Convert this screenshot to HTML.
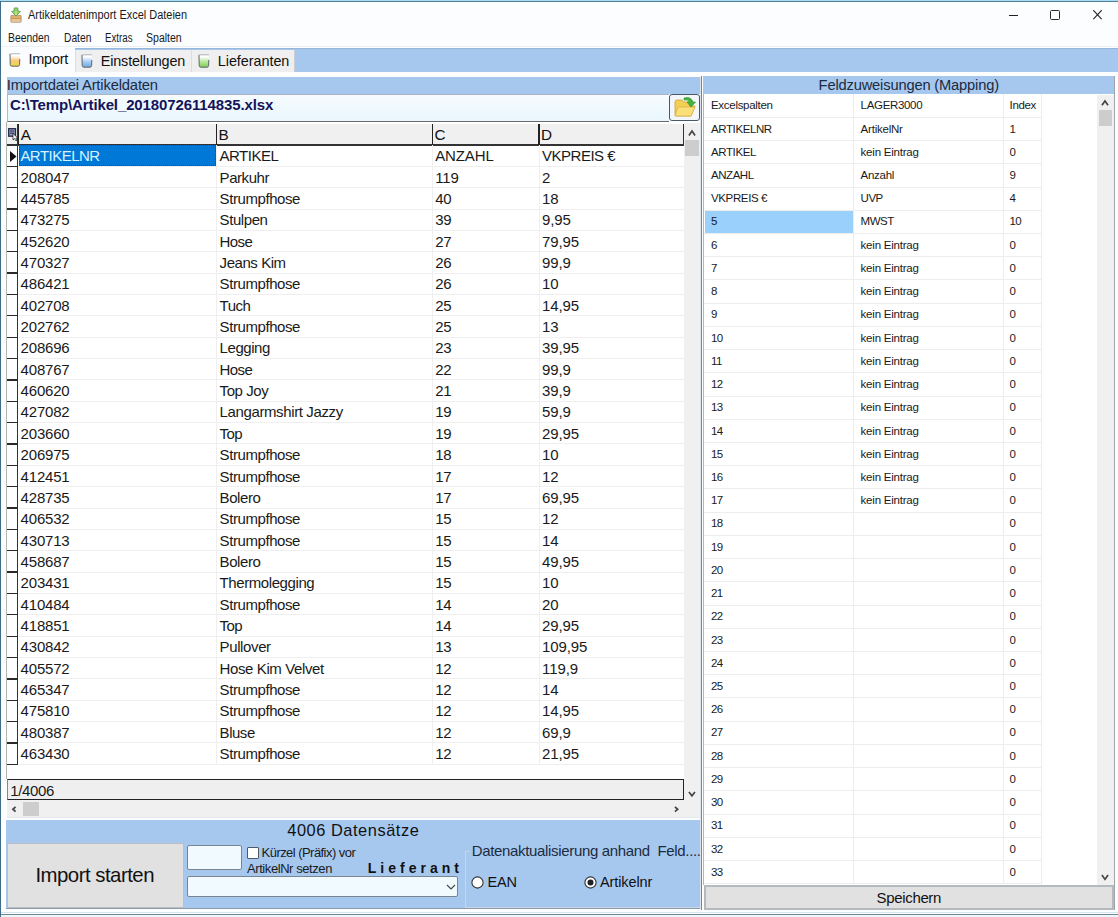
<!DOCTYPE html>
<html><head><meta charset="utf-8"><style>
html,body{margin:0;padding:0;}
body{width:1118px;height:917px;position:relative;overflow:hidden;background:#fbfdff;font-family:"Liberation Sans", sans-serif;}
body>div{position:absolute;}
.t{white-space:nowrap;}
</style></head><body>
<div style="left:0px;top:0px;width:1118px;height:1px;background:#a9dcef"></div>
<div style="left:0px;top:1px;width:1118px;height:1px;background:#4f8197"></div>
<div style="left:0px;top:1px;width:1.1px;height:916px;background:#3d6b88"></div>
<svg style="position:absolute;left:9.5px;top:6.5px" width="12" height="16" viewBox="0 0 12 16">
<defs><linearGradient id="tb" x1="0" y1="0" x2="0" y2="1"><stop offset="0" stop-color="#d9a867"/><stop offset="1" stop-color="#ecd2a8"/></linearGradient></defs>
<rect x="0.8" y="8.3" width="10.4" height="7" rx="0.8" fill="url(#tb)" stroke="#a88660" stroke-width="0.7"/>
<rect x="1.5" y="10.8" width="9" height="1" fill="#c08440" opacity="0.8"/>
<path d="M4 1.2 Q6 0.2 8 1.2 L8 4 L10.5 4.5 L6 9 L1.5 4.5 L4 4 Z" fill="#8ccb6a" stroke="#5e9a4a" stroke-width="0.7"/>
<path d="M6 4 L6 8" stroke="#d8f08a" stroke-width="1.2"/>
</svg>
<div class="t" style="left:28.20px;top:9.24px;font-size:12px;line-height:12px;transform:scaleX(0.9135);transform-origin:0.00px 0;color:#1a1a1a">Artikeldatenimport Excel Dateien</div>
<div style="left:1009px;top:14.6px;width:9px;height:1.5px;background:#222"></div>
<div style="left:1050px;top:10px;width:9.6px;height:9.5px;border:1.5px solid #2a2a2a;box-sizing:border-box;border-radius:1.5px"></div>
<svg style="position:absolute;left:1093px;top:10px" width="9" height="9.5" viewBox="0 0 9 9.5">
<path d="M0.3 0.3 L8.7 9.2 M8.7 0.3 L0.3 9.2" stroke="#222" stroke-width="1.2"/></svg>
<div class="t" style="left:7.90px;top:32.44px;font-size:12px;line-height:12px;transform:scaleX(0.8656);transform-origin:0.00px 0;color:#1a1a1a">Beenden</div>
<div class="t" style="left:63.60px;top:32.44px;font-size:12px;line-height:12px;transform:scaleX(0.8552);transform-origin:0.00px 0;color:#1a1a1a">Daten</div>
<div class="t" style="left:104.90px;top:32.44px;font-size:12px;line-height:12px;transform:scaleX(0.8083);transform-origin:0.00px 0;color:#1a1a1a">Extras</div>
<div class="t" style="left:145.90px;top:32.44px;font-size:12px;line-height:12px;transform:scaleX(0.8776);transform-origin:0.00px 0;color:#1a1a1a">Spalten</div>
<div style="left:1px;top:46px;width:1117px;height:1px;background:#eef1f4"></div>
<div style="left:1px;top:47.9px;width:1117px;height:24px;background:#a6c8ef"></div>
<div style="left:1px;top:47.9px;width:1117px;height:1.3px;background:#98b6d8"></div>
<div style="left:1px;top:47.9px;width:74px;height:24.1px;background:#fbfcfd"></div>
<div style="left:75px;top:50px;width:115.5px;height:22px;background:#efefef;border-left:1px solid #d8dde3;box-sizing:border-box"></div>
<div style="left:190.5px;top:50px;width:104px;height:22px;background:#efefef;border-left:1px solid #d8dde3;border-right:1.6px solid #c9ced4;box-sizing:border-box"></div>
<svg style="position:absolute;left:9px;top:52.5px" width="12" height="14" viewBox="0 0 12 14">
<defs><linearGradient id="g1" x1="0" y1="0" x2="0" y2="1"><stop offset="0.15" stop-color="#ffffff"/><stop offset="0.55" stop-color="#f6c97a"/><stop offset="1" stop-color="#f2d640"/></linearGradient></defs>
<path d="M1 0.8 L11 0.8 L10.6 11.6 Q10.4 13.2 9 13.2 L3 13.2 Q1.3 13.2 1.2 11.6 Z" fill="url(#g1)"/>
<path d="M1.5 0.8 L11 0.8" stroke="#9aa0a6" stroke-width="0.8"/>
<path d="M1 0.8 L1.2 11.6 Q1.3 13.2 3 13.2 L9 13.2 Q10.4 13.2 10.6 11.6 L10.8 6" stroke="#5f656c" stroke-width="1" fill="none"/>
</svg>
<svg style="position:absolute;left:80.5px;top:53.5px" width="12" height="14" viewBox="0 0 12 14">
<defs><linearGradient id="g2" x1="0" y1="0" x2="0" y2="1"><stop offset="0.15" stop-color="#ffffff"/><stop offset="0.55" stop-color="#a8cdf5"/><stop offset="1" stop-color="#6fa8de"/></linearGradient></defs>
<path d="M1 0.8 L11 0.8 L10.6 11.6 Q10.4 13.2 9 13.2 L3 13.2 Q1.3 13.2 1.2 11.6 Z" fill="url(#g2)"/>
<path d="M1.5 0.8 L11 0.8" stroke="#9aa0a6" stroke-width="0.8"/>
<path d="M1 0.8 L1.2 11.6 Q1.3 13.2 3 13.2 L9 13.2 Q10.4 13.2 10.6 11.6 L10.8 6" stroke="#5f656c" stroke-width="1" fill="none"/>
</svg>
<svg style="position:absolute;left:197.5px;top:53.5px" width="12" height="14" viewBox="0 0 12 14">
<defs><linearGradient id="g3" x1="0" y1="0" x2="0" y2="1"><stop offset="0.15" stop-color="#ffffff"/><stop offset="0.55" stop-color="#b8e79a"/><stop offset="1" stop-color="#7fcf55"/></linearGradient></defs>
<path d="M1 0.8 L11 0.8 L10.6 11.6 Q10.4 13.2 9 13.2 L3 13.2 Q1.3 13.2 1.2 11.6 Z" fill="url(#g3)"/>
<path d="M1.5 0.8 L11 0.8" stroke="#9aa0a6" stroke-width="0.8"/>
<path d="M1 0.8 L1.2 11.6 Q1.3 13.2 3 13.2 L9 13.2 Q10.4 13.2 10.6 11.6 L10.8 6" stroke="#5f656c" stroke-width="1" fill="none"/>
</svg>
<div class="t" style="left:28.40px;top:52.41px;font-size:14.4px;line-height:14.4px;letter-spacing:-0.165px;color:#111">Import</div>
<div class="t" style="left:100.80px;top:54.31px;font-size:14.4px;line-height:14.4px;letter-spacing:-0.164px;color:#111">Einstellungen</div>
<div class="t" style="left:217.80px;top:54.31px;font-size:14.4px;line-height:14.4px;letter-spacing:-0.047px;color:#111">Lieferanten</div>
<div style="left:6.5px;top:77px;width:694.5px;height:16.7px;background:#a6c8ef"></div>
<div class="t" style="left:6.80px;top:78.07px;font-size:14.8px;line-height:14.8px;letter-spacing:-0.181px;color:#1c2b40">Importdatei Artikeldaten</div>
<div style="left:6.5px;top:93.6px;width:662.5px;height:28.8px;background:linear-gradient(#f6fcff,#e9f6fd);border-top:1.2px solid #aab4be;border-bottom:1.6px solid #6a6a6a;border-left:1px solid #b8b8b8;box-sizing:border-box"></div>
<div class="t" style="left:10.00px;top:97.20px;font-size:15px;line-height:15px;letter-spacing:-0.122px;color:#14145a;font-weight:bold">C:\Temp\Artikel_20180726114835.xlsx</div>
<div style="left:669.4px;top:93.8px;width:31px;height:27.5px;background:#f3f7fb;border:1.5px solid #4a5866;border-radius:3px;box-sizing:border-box"></div>
<svg style="position:absolute;left:673px;top:96px" width="25" height="22" viewBox="0 0 25 22">
<path d="M2 6 Q2 4 4 4 L9 4 L11 6 L16 6 Q17 6 17 8 L17 10 L22 10 L18 20 L3 20 Q2 20 2 19 Z" fill="#f4cf55" stroke="#caa030" stroke-width="0.8"/>
<path d="M5 11 L22 11 L18 20 L2 20 Z" fill="#fbe07a" stroke="#d2a83a" stroke-width="0.6"/>
<path d="M11 2 Q18 0 20 6 L22.5 6 L18 11 L14 6 L16.5 6 Q15 3 11 4 Z" fill="#43b53a" stroke="#2a8a2a" stroke-width="0.6"/>
</svg>
<div style="left:5.5px;top:122.4px;width:695.0px;height:656.6px;background:#ffffff;border-left:1.1px solid #b4b4b4;box-sizing:border-box"></div>
<div style="left:6.6px;top:124.2px;width:677.4px;height:20.5px;background:#f0f0f0"></div>
<div style="left:6.6px;top:144.3px;width:677.4px;height:1.3px;background:#333"></div>
<div style="left:18.0px;top:124px;width:1.3px;height:21px;background:#222"></div>
<div style="left:215.8px;top:124px;width:1.3px;height:21px;background:#222"></div>
<div style="left:431.7px;top:124px;width:1.3px;height:21px;background:#222"></div>
<div style="left:538.3px;top:124px;width:1.3px;height:21px;background:#222"></div>
<div style="left:17.3px;top:124px;width:1.2px;height:640.5px;background:#333"></div>
<svg style="position:absolute;left:8px;top:127.5px" width="10" height="13" viewBox="0 0 10 13">
<rect x="0.7" y="0.7" width="6.8" height="7.5" fill="#9aa0c0" stroke="#23284a" stroke-width="1.3"/>
<path d="M2 3 h4.2 M2 5.2 h4.2" stroke="#23284a" stroke-width="1"/>
<path d="M5 5.5 L5 12 L6.5 10.5 L7.8 12.8 L9 12.2 L7.8 10 L9.8 10 Z" fill="#fff" stroke="#111" stroke-width="0.7"/>
</svg>
<div class="t" style="left:20.70px;top:127.05px;font-size:15.3px;line-height:15.3px;color:#111">A</div>
<div class="t" style="left:218.50px;top:127.05px;font-size:15.3px;line-height:15.3px;color:#111">B</div>
<div class="t" style="left:434.40px;top:127.05px;font-size:15.3px;line-height:15.3px;color:#111">C</div>
<div class="t" style="left:541.00px;top:127.05px;font-size:15.3px;line-height:15.3px;color:#111">D</div>
<div style="left:216.0px;top:145.0px;width:1px;height:619.295px;background:#efefef"></div>
<div style="left:431.9px;top:145.0px;width:1px;height:619.295px;background:#efefef"></div>
<div style="left:538.5px;top:145.0px;width:1px;height:619.295px;background:#efefef"></div>
<div style="left:18.7px;top:165.855px;width:665px;height:1px;background:#efefef"></div>
<div style="left:6.8px;top:165.70499999999998px;width:11px;height:1.3px;background:#2a2a2a"></div>
<div style="left:18.7px;top:145.4px;width:197.8px;height:20.555px;background:#0078d7;outline:1px dotted #0c4f8a;outline-offset:-1px"></div>
<div class="t" style="left:20.40px;top:148.20px;font-size:15px;line-height:15px;letter-spacing:-0.525px;color:#d8f2ff">ARTIKELNR</div>
<svg style="position:absolute;left:10px;top:150.5px" width="7" height="11" viewBox="0 0 7 11"><path d="M0 0 L6.5 5.5 L0 11 Z" fill="#111"/></svg>
<div class="t" style="left:219.60px;top:148.20px;font-size:15px;line-height:15px;letter-spacing:-0.519px;color:#1a1a1a">ARTIKEL</div>
<div class="t" style="left:435.20px;top:148.20px;font-size:15px;line-height:15px;letter-spacing:-0.118px;color:#1a1a1a">ANZAHL</div>
<div class="t" style="left:542.00px;top:148.20px;font-size:15px;line-height:15px;letter-spacing:-0.485px;color:#1a1a1a">VKPREIS €</div>
<div style="left:18.7px;top:187.20999999999998px;width:665px;height:1px;background:#efefef"></div>
<div style="left:6.8px;top:187.05999999999997px;width:11px;height:1.3px;background:#2a2a2a"></div>
<div class="t" style="left:20.60px;top:169.56px;font-size:15px;line-height:15px;letter-spacing:-0.200px;color:#1a1a1a">208047</div>
<div class="t" style="left:219.60px;top:169.56px;font-size:15px;line-height:15px;letter-spacing:-0.438px;color:#1a1a1a">Parkuhr</div>
<div class="t" style="left:435.20px;top:169.56px;font-size:15px;line-height:15px;letter-spacing:-0.120px;color:#1a1a1a">119</div>
<div class="t" style="left:542.00px;top:169.56px;font-size:15px;line-height:15px;color:#1a1a1a">2</div>
<div style="left:18.7px;top:208.565px;width:665px;height:1px;background:#efefef"></div>
<div style="left:6.8px;top:208.415px;width:11px;height:1.3px;background:#2a2a2a"></div>
<div class="t" style="left:20.60px;top:190.91px;font-size:15px;line-height:15px;letter-spacing:-0.200px;color:#1a1a1a">445785</div>
<div class="t" style="left:219.60px;top:190.91px;font-size:15px;line-height:15px;letter-spacing:-0.425px;color:#1a1a1a">Strumpfhose</div>
<div class="t" style="left:435.20px;top:190.91px;font-size:15px;line-height:15px;letter-spacing:-0.166px;color:#1a1a1a">40</div>
<div class="t" style="left:542.00px;top:190.91px;font-size:15px;line-height:15px;letter-spacing:-0.166px;color:#1a1a1a">18</div>
<div style="left:18.7px;top:229.92px;width:665px;height:1px;background:#efefef"></div>
<div style="left:6.8px;top:229.76999999999998px;width:11px;height:1.3px;background:#2a2a2a"></div>
<div class="t" style="left:20.60px;top:212.27px;font-size:15px;line-height:15px;letter-spacing:-0.200px;color:#1a1a1a">473275</div>
<div class="t" style="left:219.60px;top:212.27px;font-size:15px;line-height:15px;letter-spacing:-0.424px;color:#1a1a1a">Stulpen</div>
<div class="t" style="left:435.20px;top:212.27px;font-size:15px;line-height:15px;letter-spacing:-0.166px;color:#1a1a1a">39</div>
<div class="t" style="left:542.00px;top:212.27px;font-size:15px;line-height:15px;letter-spacing:-0.097px;color:#1a1a1a">9,95</div>
<div style="left:18.7px;top:251.275px;width:665px;height:1px;background:#efefef"></div>
<div style="left:6.8px;top:251.125px;width:11px;height:1.3px;background:#2a2a2a"></div>
<div class="t" style="left:20.60px;top:233.62px;font-size:15px;line-height:15px;letter-spacing:-0.200px;color:#1a1a1a">452620</div>
<div class="t" style="left:219.60px;top:233.62px;font-size:15px;line-height:15px;letter-spacing:-0.584px;color:#1a1a1a">Hose</div>
<div class="t" style="left:435.20px;top:233.62px;font-size:15px;line-height:15px;letter-spacing:-0.166px;color:#1a1a1a">27</div>
<div class="t" style="left:542.00px;top:233.62px;font-size:15px;line-height:15px;letter-spacing:-0.094px;color:#1a1a1a">79,95</div>
<div style="left:18.7px;top:272.63px;width:665px;height:1px;background:#efefef"></div>
<div style="left:6.8px;top:272.48px;width:11px;height:1.3px;background:#2a2a2a"></div>
<div class="t" style="left:20.60px;top:254.98px;font-size:15px;line-height:15px;letter-spacing:-0.200px;color:#1a1a1a">470327</div>
<div class="t" style="left:219.60px;top:254.98px;font-size:15px;line-height:15px;letter-spacing:-0.438px;color:#1a1a1a">Jeans Kim</div>
<div class="t" style="left:435.20px;top:254.98px;font-size:15px;line-height:15px;letter-spacing:-0.166px;color:#1a1a1a">26</div>
<div class="t" style="left:542.00px;top:254.98px;font-size:15px;line-height:15px;letter-spacing:-0.097px;color:#1a1a1a">99,9</div>
<div style="left:18.7px;top:293.985px;width:665px;height:1px;background:#efefef"></div>
<div style="left:6.8px;top:293.83500000000004px;width:11px;height:1.3px;background:#2a2a2a"></div>
<div class="t" style="left:20.60px;top:276.33px;font-size:15px;line-height:15px;letter-spacing:-0.200px;color:#1a1a1a">486421</div>
<div class="t" style="left:219.60px;top:276.33px;font-size:15px;line-height:15px;letter-spacing:-0.425px;color:#1a1a1a">Strumpfhose</div>
<div class="t" style="left:435.20px;top:276.33px;font-size:15px;line-height:15px;letter-spacing:-0.166px;color:#1a1a1a">26</div>
<div class="t" style="left:542.00px;top:276.33px;font-size:15px;line-height:15px;letter-spacing:-0.166px;color:#1a1a1a">10</div>
<div style="left:18.7px;top:315.34000000000003px;width:665px;height:1px;background:#efefef"></div>
<div style="left:6.8px;top:315.19000000000005px;width:11px;height:1.3px;background:#2a2a2a"></div>
<div class="t" style="left:20.60px;top:297.69px;font-size:15px;line-height:15px;letter-spacing:-0.200px;color:#1a1a1a">402708</div>
<div class="t" style="left:219.60px;top:297.69px;font-size:15px;line-height:15px;letter-spacing:-0.546px;color:#1a1a1a">Tuch</div>
<div class="t" style="left:435.20px;top:297.69px;font-size:15px;line-height:15px;letter-spacing:-0.166px;color:#1a1a1a">25</div>
<div class="t" style="left:542.00px;top:297.69px;font-size:15px;line-height:15px;letter-spacing:-0.094px;color:#1a1a1a">14,95</div>
<div style="left:18.7px;top:336.69500000000005px;width:665px;height:1px;background:#efefef"></div>
<div style="left:6.8px;top:336.5450000000001px;width:11px;height:1.3px;background:#2a2a2a"></div>
<div class="t" style="left:20.60px;top:319.04px;font-size:15px;line-height:15px;letter-spacing:-0.200px;color:#1a1a1a">202762</div>
<div class="t" style="left:219.60px;top:319.04px;font-size:15px;line-height:15px;letter-spacing:-0.425px;color:#1a1a1a">Strumpfhose</div>
<div class="t" style="left:435.20px;top:319.04px;font-size:15px;line-height:15px;letter-spacing:-0.166px;color:#1a1a1a">25</div>
<div class="t" style="left:542.00px;top:319.04px;font-size:15px;line-height:15px;letter-spacing:-0.166px;color:#1a1a1a">13</div>
<div style="left:18.7px;top:358.05px;width:665px;height:1px;background:#efefef"></div>
<div style="left:6.8px;top:357.90000000000003px;width:11px;height:1.3px;background:#2a2a2a"></div>
<div class="t" style="left:20.60px;top:340.40px;font-size:15px;line-height:15px;letter-spacing:-0.200px;color:#1a1a1a">208696</div>
<div class="t" style="left:219.60px;top:340.40px;font-size:15px;line-height:15px;letter-spacing:-0.445px;color:#1a1a1a">Legging</div>
<div class="t" style="left:435.20px;top:340.40px;font-size:15px;line-height:15px;letter-spacing:-0.166px;color:#1a1a1a">23</div>
<div class="t" style="left:542.00px;top:340.40px;font-size:15px;line-height:15px;letter-spacing:-0.094px;color:#1a1a1a">39,95</div>
<div style="left:18.7px;top:379.40500000000003px;width:665px;height:1px;background:#efefef"></div>
<div style="left:6.8px;top:379.25500000000005px;width:11px;height:1.3px;background:#2a2a2a"></div>
<div class="t" style="left:20.60px;top:361.75px;font-size:15px;line-height:15px;letter-spacing:-0.200px;color:#1a1a1a">408767</div>
<div class="t" style="left:219.60px;top:361.75px;font-size:15px;line-height:15px;letter-spacing:-0.584px;color:#1a1a1a">Hose</div>
<div class="t" style="left:435.20px;top:361.75px;font-size:15px;line-height:15px;letter-spacing:-0.166px;color:#1a1a1a">22</div>
<div class="t" style="left:542.00px;top:361.75px;font-size:15px;line-height:15px;letter-spacing:-0.097px;color:#1a1a1a">99,9</div>
<div style="left:18.7px;top:400.76px;width:665px;height:1px;background:#efefef"></div>
<div style="left:6.8px;top:400.61px;width:11px;height:1.3px;background:#2a2a2a"></div>
<div class="t" style="left:20.60px;top:383.11px;font-size:15px;line-height:15px;letter-spacing:-0.200px;color:#1a1a1a">460620</div>
<div class="t" style="left:219.60px;top:383.11px;font-size:15px;line-height:15px;letter-spacing:-0.431px;color:#1a1a1a">Top Joy</div>
<div class="t" style="left:435.20px;top:383.11px;font-size:15px;line-height:15px;letter-spacing:-0.166px;color:#1a1a1a">21</div>
<div class="t" style="left:542.00px;top:383.11px;font-size:15px;line-height:15px;letter-spacing:-0.097px;color:#1a1a1a">39,9</div>
<div style="left:18.7px;top:422.115px;width:665px;height:1px;background:#efefef"></div>
<div style="left:6.8px;top:421.96500000000003px;width:11px;height:1.3px;background:#2a2a2a"></div>
<div class="t" style="left:20.60px;top:404.46px;font-size:15px;line-height:15px;letter-spacing:-0.200px;color:#1a1a1a">427082</div>
<div class="t" style="left:219.60px;top:404.46px;font-size:15px;line-height:15px;letter-spacing:-0.383px;color:#1a1a1a">Langarmshirt Jazzy</div>
<div class="t" style="left:435.20px;top:404.46px;font-size:15px;line-height:15px;letter-spacing:-0.166px;color:#1a1a1a">19</div>
<div class="t" style="left:542.00px;top:404.46px;font-size:15px;line-height:15px;letter-spacing:-0.097px;color:#1a1a1a">59,9</div>
<div style="left:18.7px;top:443.47px;width:665px;height:1px;background:#efefef"></div>
<div style="left:6.8px;top:443.32000000000005px;width:11px;height:1.3px;background:#2a2a2a"></div>
<div class="t" style="left:20.60px;top:425.82px;font-size:15px;line-height:15px;letter-spacing:-0.200px;color:#1a1a1a">203660</div>
<div class="t" style="left:219.60px;top:425.82px;font-size:15px;line-height:15px;letter-spacing:-0.604px;color:#1a1a1a">Top</div>
<div class="t" style="left:435.20px;top:425.82px;font-size:15px;line-height:15px;letter-spacing:-0.166px;color:#1a1a1a">19</div>
<div class="t" style="left:542.00px;top:425.82px;font-size:15px;line-height:15px;letter-spacing:-0.094px;color:#1a1a1a">29,95</div>
<div style="left:18.7px;top:464.82500000000005px;width:665px;height:1px;background:#efefef"></div>
<div style="left:6.8px;top:464.67500000000007px;width:11px;height:1.3px;background:#2a2a2a"></div>
<div class="t" style="left:20.60px;top:447.17px;font-size:15px;line-height:15px;letter-spacing:-0.200px;color:#1a1a1a">206975</div>
<div class="t" style="left:219.60px;top:447.17px;font-size:15px;line-height:15px;letter-spacing:-0.425px;color:#1a1a1a">Strumpfhose</div>
<div class="t" style="left:435.20px;top:447.17px;font-size:15px;line-height:15px;letter-spacing:-0.166px;color:#1a1a1a">18</div>
<div class="t" style="left:542.00px;top:447.17px;font-size:15px;line-height:15px;letter-spacing:-0.166px;color:#1a1a1a">10</div>
<div style="left:18.7px;top:486.18px;width:665px;height:1px;background:#efefef"></div>
<div style="left:6.8px;top:486.03000000000003px;width:11px;height:1.3px;background:#2a2a2a"></div>
<div class="t" style="left:20.60px;top:468.53px;font-size:15px;line-height:15px;letter-spacing:-0.200px;color:#1a1a1a">412451</div>
<div class="t" style="left:219.60px;top:468.53px;font-size:15px;line-height:15px;letter-spacing:-0.425px;color:#1a1a1a">Strumpfhose</div>
<div class="t" style="left:435.20px;top:468.53px;font-size:15px;line-height:15px;letter-spacing:-0.166px;color:#1a1a1a">17</div>
<div class="t" style="left:542.00px;top:468.53px;font-size:15px;line-height:15px;letter-spacing:-0.166px;color:#1a1a1a">12</div>
<div style="left:18.7px;top:507.535px;width:665px;height:1px;background:#efefef"></div>
<div style="left:6.8px;top:507.38500000000005px;width:11px;height:1.3px;background:#2a2a2a"></div>
<div class="t" style="left:20.60px;top:489.88px;font-size:15px;line-height:15px;letter-spacing:-0.200px;color:#1a1a1a">428735</div>
<div class="t" style="left:219.60px;top:489.88px;font-size:15px;line-height:15px;letter-spacing:-0.434px;color:#1a1a1a">Bolero</div>
<div class="t" style="left:435.20px;top:489.88px;font-size:15px;line-height:15px;letter-spacing:-0.166px;color:#1a1a1a">17</div>
<div class="t" style="left:542.00px;top:489.88px;font-size:15px;line-height:15px;letter-spacing:-0.094px;color:#1a1a1a">69,95</div>
<div style="left:18.7px;top:528.89px;width:665px;height:1px;background:#efefef"></div>
<div style="left:6.8px;top:528.74px;width:11px;height:1.3px;background:#2a2a2a"></div>
<div class="t" style="left:20.60px;top:511.24px;font-size:15px;line-height:15px;letter-spacing:-0.200px;color:#1a1a1a">406532</div>
<div class="t" style="left:219.60px;top:511.24px;font-size:15px;line-height:15px;letter-spacing:-0.425px;color:#1a1a1a">Strumpfhose</div>
<div class="t" style="left:435.20px;top:511.24px;font-size:15px;line-height:15px;letter-spacing:-0.166px;color:#1a1a1a">15</div>
<div class="t" style="left:542.00px;top:511.24px;font-size:15px;line-height:15px;letter-spacing:-0.166px;color:#1a1a1a">12</div>
<div style="left:18.7px;top:550.245px;width:665px;height:1px;background:#efefef"></div>
<div style="left:6.8px;top:550.095px;width:11px;height:1.3px;background:#2a2a2a"></div>
<div class="t" style="left:20.60px;top:532.59px;font-size:15px;line-height:15px;letter-spacing:-0.200px;color:#1a1a1a">430713</div>
<div class="t" style="left:219.60px;top:532.59px;font-size:15px;line-height:15px;letter-spacing:-0.425px;color:#1a1a1a">Strumpfhose</div>
<div class="t" style="left:435.20px;top:532.59px;font-size:15px;line-height:15px;letter-spacing:-0.166px;color:#1a1a1a">15</div>
<div class="t" style="left:542.00px;top:532.59px;font-size:15px;line-height:15px;letter-spacing:-0.166px;color:#1a1a1a">14</div>
<div style="left:18.7px;top:571.6px;width:665px;height:1px;background:#efefef"></div>
<div style="left:6.8px;top:571.45px;width:11px;height:1.3px;background:#2a2a2a"></div>
<div class="t" style="left:20.60px;top:553.95px;font-size:15px;line-height:15px;letter-spacing:-0.200px;color:#1a1a1a">458687</div>
<div class="t" style="left:219.60px;top:553.95px;font-size:15px;line-height:15px;letter-spacing:-0.434px;color:#1a1a1a">Bolero</div>
<div class="t" style="left:435.20px;top:553.95px;font-size:15px;line-height:15px;letter-spacing:-0.166px;color:#1a1a1a">15</div>
<div class="t" style="left:542.00px;top:553.95px;font-size:15px;line-height:15px;letter-spacing:-0.094px;color:#1a1a1a">49,95</div>
<div style="left:18.7px;top:592.955px;width:665px;height:1px;background:#efefef"></div>
<div style="left:6.8px;top:592.8050000000001px;width:11px;height:1.3px;background:#2a2a2a"></div>
<div class="t" style="left:20.60px;top:575.30px;font-size:15px;line-height:15px;letter-spacing:-0.200px;color:#1a1a1a">203431</div>
<div class="t" style="left:219.60px;top:575.30px;font-size:15px;line-height:15px;letter-spacing:-0.417px;color:#1a1a1a">Thermolegging</div>
<div class="t" style="left:435.20px;top:575.30px;font-size:15px;line-height:15px;letter-spacing:-0.166px;color:#1a1a1a">15</div>
<div class="t" style="left:542.00px;top:575.30px;font-size:15px;line-height:15px;letter-spacing:-0.166px;color:#1a1a1a">10</div>
<div style="left:18.7px;top:614.31px;width:665px;height:1px;background:#efefef"></div>
<div style="left:6.8px;top:614.16px;width:11px;height:1.3px;background:#2a2a2a"></div>
<div class="t" style="left:20.60px;top:596.66px;font-size:15px;line-height:15px;letter-spacing:-0.200px;color:#1a1a1a">410484</div>
<div class="t" style="left:219.60px;top:596.66px;font-size:15px;line-height:15px;letter-spacing:-0.425px;color:#1a1a1a">Strumpfhose</div>
<div class="t" style="left:435.20px;top:596.66px;font-size:15px;line-height:15px;letter-spacing:-0.166px;color:#1a1a1a">14</div>
<div class="t" style="left:542.00px;top:596.66px;font-size:15px;line-height:15px;letter-spacing:-0.166px;color:#1a1a1a">20</div>
<div style="left:18.7px;top:635.665px;width:665px;height:1px;background:#efefef"></div>
<div style="left:6.8px;top:635.515px;width:11px;height:1.3px;background:#2a2a2a"></div>
<div class="t" style="left:20.60px;top:618.01px;font-size:15px;line-height:15px;letter-spacing:-0.200px;color:#1a1a1a">418851</div>
<div class="t" style="left:219.60px;top:618.01px;font-size:15px;line-height:15px;letter-spacing:-0.604px;color:#1a1a1a">Top</div>
<div class="t" style="left:435.20px;top:618.01px;font-size:15px;line-height:15px;letter-spacing:-0.166px;color:#1a1a1a">14</div>
<div class="t" style="left:542.00px;top:618.01px;font-size:15px;line-height:15px;letter-spacing:-0.094px;color:#1a1a1a">29,95</div>
<div style="left:18.7px;top:657.02px;width:665px;height:1px;background:#efefef"></div>
<div style="left:6.8px;top:656.87px;width:11px;height:1.3px;background:#2a2a2a"></div>
<div class="t" style="left:20.60px;top:639.37px;font-size:15px;line-height:15px;letter-spacing:-0.200px;color:#1a1a1a">430842</div>
<div class="t" style="left:219.60px;top:639.37px;font-size:15px;line-height:15px;letter-spacing:-0.387px;color:#1a1a1a">Pullover</div>
<div class="t" style="left:435.20px;top:639.37px;font-size:15px;line-height:15px;letter-spacing:-0.166px;color:#1a1a1a">13</div>
<div class="t" style="left:542.00px;top:639.37px;font-size:15px;line-height:15px;letter-spacing:-0.092px;color:#1a1a1a">109,95</div>
<div style="left:18.7px;top:678.375px;width:665px;height:1px;background:#efefef"></div>
<div style="left:6.8px;top:678.225px;width:11px;height:1.3px;background:#2a2a2a"></div>
<div class="t" style="left:20.60px;top:660.72px;font-size:15px;line-height:15px;letter-spacing:-0.200px;color:#1a1a1a">405572</div>
<div class="t" style="left:219.60px;top:660.72px;font-size:15px;line-height:15px;letter-spacing:-0.393px;color:#1a1a1a">Hose Kim Velvet</div>
<div class="t" style="left:435.20px;top:660.72px;font-size:15px;line-height:15px;letter-spacing:-0.166px;color:#1a1a1a">12</div>
<div class="t" style="left:542.00px;top:660.72px;font-size:15px;line-height:15px;letter-spacing:-0.091px;color:#1a1a1a">119,9</div>
<div style="left:18.7px;top:699.73px;width:665px;height:1px;background:#efefef"></div>
<div style="left:6.8px;top:699.58px;width:11px;height:1.3px;background:#2a2a2a"></div>
<div class="t" style="left:20.60px;top:682.08px;font-size:15px;line-height:15px;letter-spacing:-0.200px;color:#1a1a1a">465347</div>
<div class="t" style="left:219.60px;top:682.08px;font-size:15px;line-height:15px;letter-spacing:-0.425px;color:#1a1a1a">Strumpfhose</div>
<div class="t" style="left:435.20px;top:682.08px;font-size:15px;line-height:15px;letter-spacing:-0.166px;color:#1a1a1a">12</div>
<div class="t" style="left:542.00px;top:682.08px;font-size:15px;line-height:15px;letter-spacing:-0.166px;color:#1a1a1a">14</div>
<div style="left:18.7px;top:721.085px;width:665px;height:1px;background:#efefef"></div>
<div style="left:6.8px;top:720.9350000000001px;width:11px;height:1.3px;background:#2a2a2a"></div>
<div class="t" style="left:20.60px;top:703.43px;font-size:15px;line-height:15px;letter-spacing:-0.200px;color:#1a1a1a">475810</div>
<div class="t" style="left:219.60px;top:703.43px;font-size:15px;line-height:15px;letter-spacing:-0.425px;color:#1a1a1a">Strumpfhose</div>
<div class="t" style="left:435.20px;top:703.43px;font-size:15px;line-height:15px;letter-spacing:-0.166px;color:#1a1a1a">12</div>
<div class="t" style="left:542.00px;top:703.43px;font-size:15px;line-height:15px;letter-spacing:-0.094px;color:#1a1a1a">14,95</div>
<div style="left:18.7px;top:742.44px;width:665px;height:1px;background:#efefef"></div>
<div style="left:6.8px;top:742.2900000000001px;width:11px;height:1.3px;background:#2a2a2a"></div>
<div class="t" style="left:20.60px;top:724.79px;font-size:15px;line-height:15px;letter-spacing:-0.200px;color:#1a1a1a">480387</div>
<div class="t" style="left:219.60px;top:724.79px;font-size:15px;line-height:15px;letter-spacing:-0.469px;color:#1a1a1a">Bluse</div>
<div class="t" style="left:435.20px;top:724.79px;font-size:15px;line-height:15px;letter-spacing:-0.166px;color:#1a1a1a">12</div>
<div class="t" style="left:542.00px;top:724.79px;font-size:15px;line-height:15px;letter-spacing:-0.097px;color:#1a1a1a">69,9</div>
<div style="left:18.7px;top:763.7950000000001px;width:665px;height:1px;background:#efefef"></div>
<div style="left:6.8px;top:763.6450000000001px;width:11px;height:1.3px;background:#2a2a2a"></div>
<div class="t" style="left:20.60px;top:746.14px;font-size:15px;line-height:15px;letter-spacing:-0.200px;color:#1a1a1a">463430</div>
<div class="t" style="left:219.60px;top:746.14px;font-size:15px;line-height:15px;letter-spacing:-0.425px;color:#1a1a1a">Strumpfhose</div>
<div class="t" style="left:435.20px;top:746.14px;font-size:15px;line-height:15px;letter-spacing:-0.166px;color:#1a1a1a">12</div>
<div class="t" style="left:542.00px;top:746.14px;font-size:15px;line-height:15px;letter-spacing:-0.094px;color:#1a1a1a">21,95</div>
<div style="left:684px;top:122.5px;width:16.5px;height:694.7px;background:#f0f0f0"></div>
<div style="left:683px;top:124.2px;width:1px;height:21px;background:#333"></div>
<svg style="position:absolute;left:687.5px;top:129.5px;overflow:visible" width="8.00" height="6.50" viewBox="0 0 8.00 6.50"><path d="M0.935 5.5649999999999995 L4.0 0.935 L7.0649999999999995 5.5649999999999995" stroke="#454545" stroke-width="1.7" fill="none" stroke-linejoin="miter"/></svg>
<svg style="position:absolute;left:687.7px;top:790.5px;overflow:visible" width="7.90" height="5.80" viewBox="0 0 7.90 5.80"><path d="M0.935 0.935 L3.9499999999999886 4.864999999999954 L6.964999999999977 0.935" stroke="#454545" stroke-width="1.7" fill="none" stroke-linejoin="miter"/></svg>
<div style="left:685px;top:140.1px;width:13.5px;height:15.5px;background:#cdcdcd"></div>
<div style="left:6.5px;top:778.6px;width:677.5px;height:21.8px;background:#efefef;border:1.4px solid #222;border-left:1px solid #888;box-sizing:border-box"></div>
<div class="t" style="left:10.30px;top:782.70px;font-size:15px;line-height:15px;letter-spacing:-0.380px;color:#1a1a1a">1/4006</div>
<div style="left:6.5px;top:800.4px;width:678px;height:17px;background:#f0f0f0"></div>
<div style="left:23.2px;top:801.9px;width:15.8px;height:14px;background:#cdcdcd"></div>
<svg style="position:absolute;left:12px;top:805.5px;overflow:visible" width="4.50" height="6.50" viewBox="0 0 4.50 6.50"><path d="M3.565 0.935 L0.935 3.25 L3.565 5.5649999999999995" stroke="#454545" stroke-width="1.7" fill="none" stroke-linejoin="miter"/></svg>
<svg style="position:absolute;left:674px;top:805.5px;overflow:visible" width="4.60" height="6.50" viewBox="0 0 4.60 6.50"><path d="M0.935 0.935 L3.6650000000000227 3.25 L0.935 5.5649999999999995" stroke="#454545" stroke-width="1.7" fill="none" stroke-linejoin="miter"/></svg>
<div style="left:6.5px;top:817.2px;width:694px;height:1.2px;background:#e4e8ec"></div>
<div style="left:6.4px;top:819.5px;width:694.3px;height:89.5px;background:#a6c8ef;border-bottom:1.4px solid #8e9aa8;box-sizing:border-box"></div>
<div class="t" style="left:287.30px;top:822.32px;font-size:16.4px;line-height:16.4px;letter-spacing:0.537px;color:#111">4006 Datensätze</div>
<div style="left:7.0px;top:843px;width:176.5px;height:64.7px;background:#e1e1e1;border:1.2px solid #b9bfc5;box-sizing:border-box"></div>
<div class="t" style="left:35.40px;top:864.73px;font-size:20.4px;line-height:20.4px;letter-spacing:-0.513px;color:#111">Import starten</div>
<div style="left:186.7px;top:845.4px;width:55px;height:24.2px;background:#f0faff;border:1.3px solid #7a8591;border-radius:2px;box-sizing:border-box"></div>
<div style="left:247px;top:846.5px;width:11.8px;height:12px;background:#fff;border:1.4px solid #505a66;border-radius:1px;box-sizing:border-box"></div>
<div class="t" style="left:261.60px;top:846.00px;font-size:13px;line-height:13px;letter-spacing:-0.550px;color:#1a1a1a">Kürzel (Präfix) vor</div>
<div class="t" style="left:247.00px;top:862.00px;font-size:13px;line-height:13px;letter-spacing:-0.425px;color:#1a1a1a">ArtikelNr setzen</div>
<div class="t" style="left:367.80px;top:861.15px;font-size:14px;line-height:14px;letter-spacing:4.006px;color:#111;font-weight:bold">Lieferant</div>
<div style="left:186.7px;top:875.7px;width:271.8px;height:21.5px;background:#f0faff;border:1.3px solid #7a8591;border-radius:2px;box-sizing:border-box"></div>
<svg style="position:absolute;left:446px;top:884px" width="10" height="6" viewBox="0 0 10 6"><path d="M1 1 L5 5 L9 1" stroke="#444" stroke-width="1.1" fill="none"/></svg>
<div style="left:465px;top:851px;width:236px;height:56.5px;border:1px solid #c9d6e6;border-right:none;box-sizing:border-box"></div>
<div style="left:470px;top:840px;width:231px;height:18px;background:#a6c8ef"></div>
<div class="t" style="left:471.70px;top:843.00px;font-size:15px;line-height:15px;letter-spacing:-0.334px;color:#1c2b40">Datenaktualisierung anhand&nbsp; Feld....</div>
<svg style="position:absolute;left:470.8px;top:876.3px" width="13" height="13" viewBox="0 0 13 13">
<circle cx="6.5" cy="6.5" r="5.6" fill="#fff" stroke="#333" stroke-width="1.1"/></svg>
<svg style="position:absolute;left:583.8px;top:876.3px" width="13" height="13" viewBox="0 0 13 13">
<circle cx="6.5" cy="6.5" r="5.6" fill="#fff" stroke="#333" stroke-width="1.1"/><circle cx="6.5" cy="6.5" r="3" fill="#222"/></svg>
<div class="t" style="left:487.40px;top:874.73px;font-size:14.5px;line-height:14.5px;letter-spacing:-0.099px;color:#111">EAN</div>
<div class="t" style="left:600.00px;top:874.73px;font-size:14.5px;line-height:14.5px;letter-spacing:-0.102px;color:#111">Artikelnr</div>
<div style="left:699.6px;top:77px;width:1px;height:832px;background:#dde3ea"></div>
<div style="left:700.6px;top:75.6px;width:1.4px;height:834px;background:#7d848b"></div>
<div style="left:703.2px;top:93.3px;width:1.1px;height:792px;background:#b2b6ba"></div>
<div style="left:1113.8px;top:76px;width:1.6px;height:834px;background:#a0a4a8"></div>
<div style="left:703.4px;top:76.3px;width:410.4px;height:17.6px;background:#a6c8ef"></div>
<div class="t" style="left:818.60px;top:78.26px;font-size:14.7px;line-height:14.7px;letter-spacing:-0.167px;color:#1c2b40">Feldzuweisungen (Mapping)</div>
<div style="left:704.3px;top:93.9px;width:409.5px;height:791.5px;background:#fff"></div>
<div style="left:853.0px;top:94.1px;width:1px;height:789.6500000000001px;background:#ededed"></div>
<div style="left:1003.0px;top:94.1px;width:1px;height:789.6500000000001px;background:#ededed"></div>
<div style="left:1040.5px;top:94.1px;width:1px;height:789.6500000000001px;background:#ededed"></div>
<div style="left:704.3px;top:116.82499999999999px;width:336.7px;height:1px;background:#ededed"></div>
<div class="t" style="left:711.00px;top:100.37px;font-size:11.5px;line-height:11.5px;letter-spacing:-0.296px;color:#1a1a1a">Excelspalten</div>
<div class="t" style="left:860.60px;top:100.37px;font-size:11.5px;line-height:11.5px;letter-spacing:-0.323px;color:#1a1a1a">LAGER3000</div>
<div class="t" style="left:1009.60px;top:100.37px;font-size:11.5px;line-height:11.5px;letter-spacing:-0.351px;color:#1a1a1a">Index</div>
<div style="left:704.3px;top:140.04999999999998px;width:336.7px;height:1px;background:#ededed"></div>
<div class="t" style="left:711.00px;top:123.59px;font-size:11.5px;line-height:11.5px;letter-spacing:-0.402px;color:#1a1a1a">ARTIKELNR</div>
<div class="t" style="left:860.60px;top:123.59px;font-size:11.5px;line-height:11.5px;letter-spacing:-0.221px;color:#1a1a1a">ArtikelNr</div>
<div class="t" style="left:1009.60px;top:123.59px;font-size:11.5px;line-height:11.5px;color:#1a1a1a">1</div>
<div style="left:704.3px;top:163.275px;width:336.7px;height:1px;background:#ededed"></div>
<div class="t" style="left:711.00px;top:146.82px;font-size:11.5px;line-height:11.5px;letter-spacing:-0.398px;color:#1a1a1a">ARTIKEL</div>
<div class="t" style="left:860.60px;top:146.82px;font-size:11.5px;line-height:11.5px;letter-spacing:-0.221px;color:#1a1a1a">kein Eintrag</div>
<div class="t" style="left:1009.60px;top:146.82px;font-size:11.5px;line-height:11.5px;color:#1a1a1a">0</div>
<div style="left:704.3px;top:186.5px;width:336.7px;height:1px;background:#ededed"></div>
<div class="t" style="left:711.00px;top:170.04px;font-size:11.5px;line-height:11.5px;letter-spacing:-0.454px;color:#1a1a1a">ANZAHL</div>
<div class="t" style="left:860.60px;top:170.04px;font-size:11.5px;line-height:11.5px;letter-spacing:-0.282px;color:#1a1a1a">Anzahl</div>
<div class="t" style="left:1009.60px;top:170.04px;font-size:11.5px;line-height:11.5px;color:#1a1a1a">9</div>
<div style="left:704.3px;top:209.725px;width:336.7px;height:1px;background:#ededed"></div>
<div class="t" style="left:711.00px;top:193.27px;font-size:11.5px;line-height:11.5px;letter-spacing:-0.372px;color:#1a1a1a">VKPREIS €</div>
<div class="t" style="left:860.60px;top:193.27px;font-size:11.5px;line-height:11.5px;letter-spacing:-0.473px;color:#1a1a1a">UVP</div>
<div class="t" style="left:1009.60px;top:193.27px;font-size:11.5px;line-height:11.5px;color:#1a1a1a">4</div>
<div style="left:704.3px;top:232.95px;width:336.7px;height:1px;background:#ededed"></div>
<div style="left:705.2px;top:211.025px;width:148px;height:21.725px;background:#99d0fc"></div>
<div class="t" style="left:711.00px;top:216.49px;font-size:11.5px;line-height:11.5px;color:#1a1a1a">5</div>
<div class="t" style="left:860.60px;top:216.49px;font-size:11.5px;line-height:11.5px;letter-spacing:-0.468px;color:#1a1a1a">MWST</div>
<div class="t" style="left:1009.60px;top:216.49px;font-size:11.5px;line-height:11.5px;letter-spacing:-0.638px;color:#1a1a1a">10</div>
<div style="left:704.3px;top:256.175px;width:336.7px;height:1px;background:#ededed"></div>
<div class="t" style="left:711.00px;top:239.72px;font-size:11.5px;line-height:11.5px;color:#1a1a1a">6</div>
<div class="t" style="left:860.60px;top:239.72px;font-size:11.5px;line-height:11.5px;letter-spacing:-0.221px;color:#1a1a1a">kein Eintrag</div>
<div class="t" style="left:1009.60px;top:239.72px;font-size:11.5px;line-height:11.5px;color:#1a1a1a">0</div>
<div style="left:704.3px;top:279.40000000000003px;width:336.7px;height:1px;background:#ededed"></div>
<div class="t" style="left:711.00px;top:262.94px;font-size:11.5px;line-height:11.5px;color:#1a1a1a">7</div>
<div class="t" style="left:860.60px;top:262.94px;font-size:11.5px;line-height:11.5px;letter-spacing:-0.221px;color:#1a1a1a">kein Eintrag</div>
<div class="t" style="left:1009.60px;top:262.94px;font-size:11.5px;line-height:11.5px;color:#1a1a1a">0</div>
<div style="left:704.3px;top:302.625px;width:336.7px;height:1px;background:#ededed"></div>
<div class="t" style="left:711.00px;top:286.17px;font-size:11.5px;line-height:11.5px;color:#1a1a1a">8</div>
<div class="t" style="left:860.60px;top:286.17px;font-size:11.5px;line-height:11.5px;letter-spacing:-0.221px;color:#1a1a1a">kein Eintrag</div>
<div class="t" style="left:1009.60px;top:286.17px;font-size:11.5px;line-height:11.5px;color:#1a1a1a">0</div>
<div style="left:704.3px;top:325.85px;width:336.7px;height:1px;background:#ededed"></div>
<div class="t" style="left:711.00px;top:309.39px;font-size:11.5px;line-height:11.5px;color:#1a1a1a">9</div>
<div class="t" style="left:860.60px;top:309.39px;font-size:11.5px;line-height:11.5px;letter-spacing:-0.221px;color:#1a1a1a">kein Eintrag</div>
<div class="t" style="left:1009.60px;top:309.39px;font-size:11.5px;line-height:11.5px;color:#1a1a1a">0</div>
<div style="left:704.3px;top:349.07500000000005px;width:336.7px;height:1px;background:#ededed"></div>
<div class="t" style="left:711.00px;top:332.62px;font-size:11.5px;line-height:11.5px;letter-spacing:-0.638px;color:#1a1a1a">10</div>
<div class="t" style="left:860.60px;top:332.62px;font-size:11.5px;line-height:11.5px;letter-spacing:-0.221px;color:#1a1a1a">kein Eintrag</div>
<div class="t" style="left:1009.60px;top:332.62px;font-size:11.5px;line-height:11.5px;color:#1a1a1a">0</div>
<div style="left:704.3px;top:372.30000000000007px;width:336.7px;height:1px;background:#ededed"></div>
<div class="t" style="left:711.00px;top:355.84px;font-size:11.5px;line-height:11.5px;letter-spacing:-0.598px;color:#1a1a1a">11</div>
<div class="t" style="left:860.60px;top:355.84px;font-size:11.5px;line-height:11.5px;letter-spacing:-0.221px;color:#1a1a1a">kein Eintrag</div>
<div class="t" style="left:1009.60px;top:355.84px;font-size:11.5px;line-height:11.5px;color:#1a1a1a">0</div>
<div style="left:704.3px;top:395.5250000000001px;width:336.7px;height:1px;background:#ededed"></div>
<div class="t" style="left:711.00px;top:379.07px;font-size:11.5px;line-height:11.5px;letter-spacing:-0.638px;color:#1a1a1a">12</div>
<div class="t" style="left:860.60px;top:379.07px;font-size:11.5px;line-height:11.5px;letter-spacing:-0.221px;color:#1a1a1a">kein Eintrag</div>
<div class="t" style="left:1009.60px;top:379.07px;font-size:11.5px;line-height:11.5px;color:#1a1a1a">0</div>
<div style="left:704.3px;top:418.75px;width:336.7px;height:1px;background:#ededed"></div>
<div class="t" style="left:711.00px;top:402.29px;font-size:11.5px;line-height:11.5px;letter-spacing:-0.638px;color:#1a1a1a">13</div>
<div class="t" style="left:860.60px;top:402.29px;font-size:11.5px;line-height:11.5px;letter-spacing:-0.221px;color:#1a1a1a">kein Eintrag</div>
<div class="t" style="left:1009.60px;top:402.29px;font-size:11.5px;line-height:11.5px;color:#1a1a1a">0</div>
<div style="left:704.3px;top:441.975px;width:336.7px;height:1px;background:#ededed"></div>
<div class="t" style="left:711.00px;top:425.52px;font-size:11.5px;line-height:11.5px;letter-spacing:-0.638px;color:#1a1a1a">14</div>
<div class="t" style="left:860.60px;top:425.52px;font-size:11.5px;line-height:11.5px;letter-spacing:-0.221px;color:#1a1a1a">kein Eintrag</div>
<div class="t" style="left:1009.60px;top:425.52px;font-size:11.5px;line-height:11.5px;color:#1a1a1a">0</div>
<div style="left:704.3px;top:465.20000000000005px;width:336.7px;height:1px;background:#ededed"></div>
<div class="t" style="left:711.00px;top:448.74px;font-size:11.5px;line-height:11.5px;letter-spacing:-0.638px;color:#1a1a1a">15</div>
<div class="t" style="left:860.60px;top:448.74px;font-size:11.5px;line-height:11.5px;letter-spacing:-0.221px;color:#1a1a1a">kein Eintrag</div>
<div class="t" style="left:1009.60px;top:448.74px;font-size:11.5px;line-height:11.5px;color:#1a1a1a">0</div>
<div style="left:704.3px;top:488.42500000000007px;width:336.7px;height:1px;background:#ededed"></div>
<div class="t" style="left:711.00px;top:471.97px;font-size:11.5px;line-height:11.5px;letter-spacing:-0.638px;color:#1a1a1a">16</div>
<div class="t" style="left:860.60px;top:471.97px;font-size:11.5px;line-height:11.5px;letter-spacing:-0.221px;color:#1a1a1a">kein Eintrag</div>
<div class="t" style="left:1009.60px;top:471.97px;font-size:11.5px;line-height:11.5px;color:#1a1a1a">0</div>
<div style="left:704.3px;top:511.6500000000001px;width:336.7px;height:1px;background:#ededed"></div>
<div class="t" style="left:711.00px;top:495.19px;font-size:11.5px;line-height:11.5px;letter-spacing:-0.638px;color:#1a1a1a">17</div>
<div class="t" style="left:860.60px;top:495.19px;font-size:11.5px;line-height:11.5px;letter-spacing:-0.221px;color:#1a1a1a">kein Eintrag</div>
<div class="t" style="left:1009.60px;top:495.19px;font-size:11.5px;line-height:11.5px;color:#1a1a1a">0</div>
<div style="left:704.3px;top:534.875px;width:336.7px;height:1px;background:#ededed"></div>
<div class="t" style="left:711.00px;top:518.42px;font-size:11.5px;line-height:11.5px;letter-spacing:-0.638px;color:#1a1a1a">18</div>
<div class="t" style="left:1009.60px;top:518.42px;font-size:11.5px;line-height:11.5px;color:#1a1a1a">0</div>
<div style="left:704.3px;top:558.1px;width:336.7px;height:1px;background:#ededed"></div>
<div class="t" style="left:711.00px;top:541.64px;font-size:11.5px;line-height:11.5px;letter-spacing:-0.638px;color:#1a1a1a">19</div>
<div class="t" style="left:1009.60px;top:541.64px;font-size:11.5px;line-height:11.5px;color:#1a1a1a">0</div>
<div style="left:704.3px;top:581.325px;width:336.7px;height:1px;background:#ededed"></div>
<div class="t" style="left:711.00px;top:564.87px;font-size:11.5px;line-height:11.5px;letter-spacing:-0.638px;color:#1a1a1a">20</div>
<div class="t" style="left:1009.60px;top:564.87px;font-size:11.5px;line-height:11.5px;color:#1a1a1a">0</div>
<div style="left:704.3px;top:604.5500000000001px;width:336.7px;height:1px;background:#ededed"></div>
<div class="t" style="left:711.00px;top:588.09px;font-size:11.5px;line-height:11.5px;letter-spacing:-0.638px;color:#1a1a1a">21</div>
<div class="t" style="left:1009.60px;top:588.09px;font-size:11.5px;line-height:11.5px;color:#1a1a1a">0</div>
<div style="left:704.3px;top:627.7750000000001px;width:336.7px;height:1px;background:#ededed"></div>
<div class="t" style="left:711.00px;top:611.32px;font-size:11.5px;line-height:11.5px;letter-spacing:-0.638px;color:#1a1a1a">22</div>
<div class="t" style="left:1009.60px;top:611.32px;font-size:11.5px;line-height:11.5px;color:#1a1a1a">0</div>
<div style="left:704.3px;top:651.0000000000001px;width:336.7px;height:1px;background:#ededed"></div>
<div class="t" style="left:711.00px;top:634.54px;font-size:11.5px;line-height:11.5px;letter-spacing:-0.638px;color:#1a1a1a">23</div>
<div class="t" style="left:1009.60px;top:634.54px;font-size:11.5px;line-height:11.5px;color:#1a1a1a">0</div>
<div style="left:704.3px;top:674.2250000000001px;width:336.7px;height:1px;background:#ededed"></div>
<div class="t" style="left:711.00px;top:657.77px;font-size:11.5px;line-height:11.5px;letter-spacing:-0.638px;color:#1a1a1a">24</div>
<div class="t" style="left:1009.60px;top:657.77px;font-size:11.5px;line-height:11.5px;color:#1a1a1a">0</div>
<div style="left:704.3px;top:697.45px;width:336.7px;height:1px;background:#ededed"></div>
<div class="t" style="left:711.00px;top:680.99px;font-size:11.5px;line-height:11.5px;letter-spacing:-0.638px;color:#1a1a1a">25</div>
<div class="t" style="left:1009.60px;top:680.99px;font-size:11.5px;line-height:11.5px;color:#1a1a1a">0</div>
<div style="left:704.3px;top:720.6750000000001px;width:336.7px;height:1px;background:#ededed"></div>
<div class="t" style="left:711.00px;top:704.22px;font-size:11.5px;line-height:11.5px;letter-spacing:-0.638px;color:#1a1a1a">26</div>
<div class="t" style="left:1009.60px;top:704.22px;font-size:11.5px;line-height:11.5px;color:#1a1a1a">0</div>
<div style="left:704.3px;top:743.9000000000001px;width:336.7px;height:1px;background:#ededed"></div>
<div class="t" style="left:711.00px;top:727.44px;font-size:11.5px;line-height:11.5px;letter-spacing:-0.638px;color:#1a1a1a">27</div>
<div class="t" style="left:1009.60px;top:727.44px;font-size:11.5px;line-height:11.5px;color:#1a1a1a">0</div>
<div style="left:704.3px;top:767.1250000000001px;width:336.7px;height:1px;background:#ededed"></div>
<div class="t" style="left:711.00px;top:750.67px;font-size:11.5px;line-height:11.5px;letter-spacing:-0.638px;color:#1a1a1a">28</div>
<div class="t" style="left:1009.60px;top:750.67px;font-size:11.5px;line-height:11.5px;color:#1a1a1a">0</div>
<div style="left:704.3px;top:790.3500000000001px;width:336.7px;height:1px;background:#ededed"></div>
<div class="t" style="left:711.00px;top:773.89px;font-size:11.5px;line-height:11.5px;letter-spacing:-0.638px;color:#1a1a1a">29</div>
<div class="t" style="left:1009.60px;top:773.89px;font-size:11.5px;line-height:11.5px;color:#1a1a1a">0</div>
<div style="left:704.3px;top:813.575px;width:336.7px;height:1px;background:#ededed"></div>
<div class="t" style="left:711.00px;top:797.12px;font-size:11.5px;line-height:11.5px;letter-spacing:-0.638px;color:#1a1a1a">30</div>
<div class="t" style="left:1009.60px;top:797.12px;font-size:11.5px;line-height:11.5px;color:#1a1a1a">0</div>
<div style="left:704.3px;top:836.8000000000001px;width:336.7px;height:1px;background:#ededed"></div>
<div class="t" style="left:711.00px;top:820.34px;font-size:11.5px;line-height:11.5px;letter-spacing:-0.638px;color:#1a1a1a">31</div>
<div class="t" style="left:1009.60px;top:820.34px;font-size:11.5px;line-height:11.5px;color:#1a1a1a">0</div>
<div style="left:704.3px;top:860.0250000000001px;width:336.7px;height:1px;background:#ededed"></div>
<div class="t" style="left:711.00px;top:843.57px;font-size:11.5px;line-height:11.5px;letter-spacing:-0.638px;color:#1a1a1a">32</div>
<div class="t" style="left:1009.60px;top:843.57px;font-size:11.5px;line-height:11.5px;color:#1a1a1a">0</div>
<div style="left:704.3px;top:883.2500000000001px;width:336.7px;height:1px;background:#ededed"></div>
<div class="t" style="left:711.00px;top:866.79px;font-size:11.5px;line-height:11.5px;letter-spacing:-0.638px;color:#1a1a1a">33</div>
<div class="t" style="left:1009.60px;top:866.79px;font-size:11.5px;line-height:11.5px;color:#1a1a1a">0</div>
<div style="left:1097px;top:94.5px;width:16.5px;height:790.5px;background:#f0f0f0"></div>
<div style="left:1098.5px;top:110.2px;width:13px;height:15.8px;background:#cdcdcd"></div>
<svg style="position:absolute;left:1100.5px;top:100px;overflow:visible" width="8.00" height="6.20" viewBox="0 0 8.00 6.20"><path d="M0.935 5.265000000000002 L4.0 0.935 L7.0649999999999995 5.265000000000002" stroke="#454545" stroke-width="1.7" fill="none" stroke-linejoin="miter"/></svg>
<svg style="position:absolute;left:1100.5px;top:873.7px;overflow:visible" width="8.00" height="6.30" viewBox="0 0 8.00 6.30"><path d="M0.935 0.935 L4.0 5.364999999999954 L7.0649999999999995 0.935" stroke="#454545" stroke-width="1.7" fill="none" stroke-linejoin="miter"/></svg>
<div style="left:703.7px;top:885.4px;width:410px;height:24.6px;background:#e1e1e1;border:2.2px solid #b4b9be;box-sizing:border-box"></div>
<div class="t" style="left:876.60px;top:890.10px;font-size:15px;line-height:15px;letter-spacing:-0.347px;color:#111">Speichern</div>
<div style="left:1px;top:912px;width:1117px;height:0.8px;background:#d6e6f0"></div>
<div style="left:1px;top:913.8px;width:1117px;height:1.1px;background:#6f8898"></div>
<div style="left:1px;top:915px;width:1117px;height:2px;background:#eef6fa"></div>
</body></html>
